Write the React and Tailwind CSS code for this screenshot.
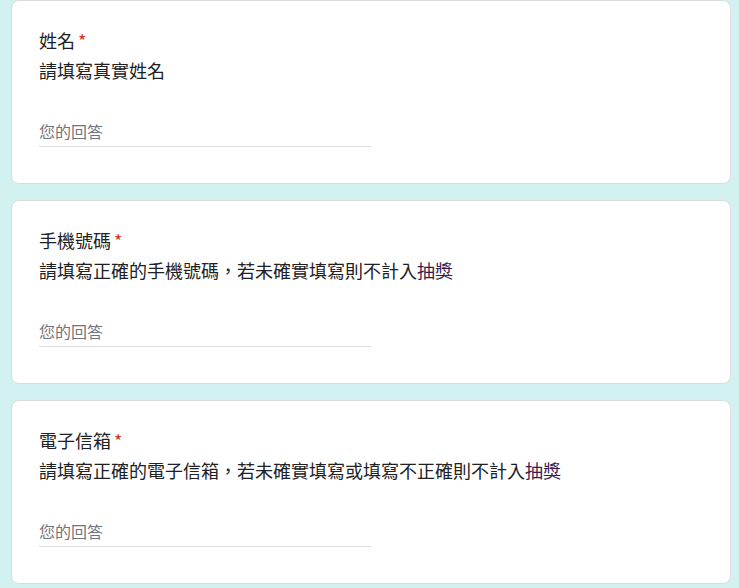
import React from "react";

const QUESTIONS = [
  { title: "姓名", desc: ["請填寫真實姓名"] },
  { title: "手機號碼", desc: ["請填寫正確的手機號碼，若未確實填寫則不計入", "抽獎"] },
  { title: "電子信箱", desc: ["請填寫正確的電子信箱，若未確實填寫或填寫不正確則不計入", "抽獎"] },
];

function QuestionCard({ title, desc }) {
  return (
    <div className="ml-[11px] w-[720px] h-[184px] shrink-0 bg-white border border-[#dadce0] rounded-lg px-[27px] pt-[27px]">
      {/* Title */}
      <div className="text-[18px] leading-6 text-[#202124]">
        {title}
        <span className="text-[#d93025] ml-[3px]">*</span>
      </div>
      {/* Description */}
      <div className="mt-[6px] text-[18px] leading-6 text-[#202124]">
        {desc[0]}
        {desc[1] && <span className="text-[#3b1a4e]">{desc[1]}</span>}
      </div>
      {/* Answer input */}
      <div className="mt-[37px] w-[332px] pb-[3px] border-b border-[#dadce0] text-[16px] leading-6 text-[#70757a]">
        您的回答
      </div>
    </div>
  );
}

export default function App() {
  return (
    <div
      className="w-[739px] h-[588px] overflow-hidden bg-[#d4f1f1] flex flex-col gap-[16px]"
      style={{ fontFamily: '"Noto Sans CJK TC", Roboto, Arial, sans-serif' }}
    >
      {QUESTIONS.map((q) => (
        <QuestionCard key={q.title} {...q} />
      ))}
    </div>
  );
}
